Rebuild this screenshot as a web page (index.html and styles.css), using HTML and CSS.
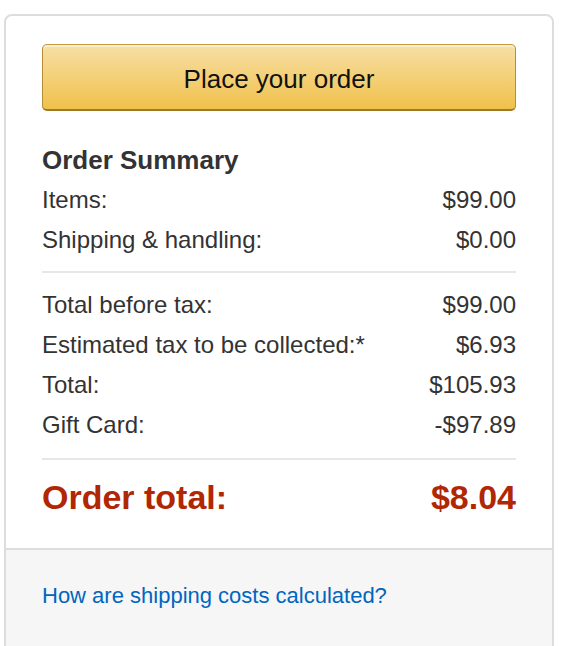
FILE: index.html
```html
<!DOCTYPE html>
<html lang="en">
<head>
<meta charset="utf-8">
<title>Order Summary</title>
<link rel="stylesheet" href="styles.css">
</head>
<body>
<div class="card">
  <div class="card-body">
    <button class="place-btn" type="button">Place your order</button>
    <h3 class="summary-title">Order Summary</h3>
    <div class="row"><span>Items:</span><span>$99.00</span></div>
    <div class="row"><span>Shipping &amp; handling:</span><span>$0.00</span></div>
    <hr class="divider divider-a">
    <div class="row"><span>Total before tax:</span><span>$99.00</span></div>
    <div class="row"><span>Estimated tax to be collected:*</span><span>$6.93</span></div>
    <div class="row"><span>Total:</span><span>$105.93</span></div>
    <div class="row"><span>Gift Card:</span><span>-$97.89</span></div>
    <hr class="divider divider-b">
    <div class="row total-row"><span>Order total:</span><span>$8.04</span></div>
  </div>
  <div class="card-footer">
    <a class="help-link" href="#">How are shipping costs calculated?</a>
  </div>
</div>
</body>
</html>
```

FILE: styles.css
```css
* { box-sizing: border-box; }

html, body {
  margin: 0;
  padding: 0;
  background: #ffffff;
  font-family: "Liberation Sans", Arial, sans-serif;
  color: #333333;
}

body {
  padding: 14px 0 0 4px;
}

.card {
  width: 550px;
  border: 2px solid #dddddd;
  border-radius: 8px;
  overflow: hidden;
  background: #ffffff;
}

.card-body {
  padding: 28px 36px 31px 36px;
}

.place-btn {
  display: block;
  width: 100%;
  height: 67px;
  margin: 0;
  padding: 5px 0 0;
  border: 1px solid;
  border-color: #c69d3e #b58d34 #9c7a2a;
  border-bottom-width: 2px;
  border-radius: 5px;
  background: linear-gradient(to bottom, #f7dfa5, #f0c14b);
  box-shadow: inset 0 2px 0 rgba(255, 255, 255, 0.45);
  font-family: "Liberation Sans", Arial, sans-serif;
  font-size: 26px;
  color: #111111;
  cursor: pointer;
}

.summary-title {
  margin: 33px 0 4px;
  font-size: 26px;
  line-height: 32px;
  font-weight: bold;
  color: #333333;
}

.row {
  display: flex;
  justify-content: space-between;
  font-size: 24px;
  line-height: 40px;
  color: #333333;
}

.divider {
  border: 0;
  height: 2px;
  background: #e7e7e7;
  margin: 0;
}

.divider-a { margin: 11px 0 12px; }
.divider-b { margin: 13px 0 17px; }

.total-row {
  font-size: 34px;
  font-weight: bold;
  color: #b12704;
}

.card-footer {
  border-top: 2px solid #dddddd;
  background: #f6f6f6;
  padding: 31px 36px 60px;
}

.help-link {
  display: block;
  font-size: 22px;
  line-height: 30px;
  color: #0066c0;
  text-decoration: none;
}
```
